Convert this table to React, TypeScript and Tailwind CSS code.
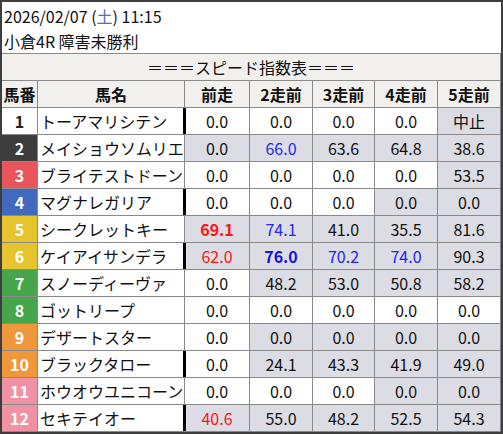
type Cell = {
    v: string;
    gray?: boolean;
    color?: "red" | "blue";
    bold?: boolean;
};

type Row = {
    num: number;
    name: string;
    bar?: boolean;
    cells: Cell[];
};

// waku colours (枠番)
const wakuClass: Record<number, string> = {
    1: "bg-white text-[#222]",
    2: "bg-[#3d3d3d] text-white",
    3: "bg-[#e8555b] text-white",
    4: "bg-[#4169c0] text-white",
    5: "bg-[#e6c42e] text-white",
    6: "bg-[#e6c42e] text-white",
    7: "bg-[#46a64b] text-white",
    8: "bg-[#46a64b] text-white",
    9: "bg-[#f0973b] text-white",
    10: "bg-[#f0973b] text-white",
    11: "bg-[#f191a4] text-white",
    12: "bg-[#f191a4] text-white",
};

const w = (v: string): Cell => ({ v });
const g = (v: string, extra: Partial<Cell> = {}): Cell => ({ v, gray: true, ...extra });

const rows: Row[] = [
    { num: 1, name: "トーアマリシテン", bar: true, cells: [w("0.0"), w("0.0"), w("0.0"), w("0.0"), g("中止")] },
    { num: 2, name: "メイショウソムリエ", cells: [g("0.0"), g("66.0", { color: "blue" }), g("63.6"), g("64.8"), g("38.6")] },
    { num: 3, name: "ブライテストドーン", cells: [w("0.0"), w("0.0"), w("0.0"), w("0.0"), g("53.5")] },
    { num: 4, name: "マグナレガリア", bar: true, cells: [w("0.0"), w("0.0"), w("0.0"), g("0.0"), g("0.0")] },
    {
        num: 5,
        name: "シークレットキー",
        cells: [g("69.1", { color: "red", bold: true }), g("74.1", { color: "blue" }), g("41.0"), g("35.5"), g("81.6")],
    },
    {
        num: 6,
        name: "ケイアイサンデラ",
        bar: true,
        cells: [
            g("62.0", { color: "red" }),
            g("76.0", { color: "blue", bold: true }),
            g("70.2", { color: "blue" }),
            g("74.0", { color: "blue" }),
            g("90.3"),
        ],
    },
    { num: 7, name: "スノーディーヴァ", cells: [w("0.0"), g("48.2"), g("53.0"), g("50.8"), g("58.2")] },
    { num: 8, name: "ゴットリープ", cells: [w("0.0"), w("0.0"), w("0.0"), w("0.0"), w("0.0")] },
    { num: 9, name: "デザートスター", cells: [w("0.0"), g("0.0"), g("0.0"), g("0.0"), g("0.0")] },
    { num: 10, name: "ブラックタロー", bar: true, cells: [w("0.0"), g("24.1"), g("43.3"), g("41.9"), g("49.0")] },
    { num: 11, name: "ホウオウユニコーン", cells: [w("0.0"), w("0.0"), w("0.0"), g("0.0"), g("0.0")] },
    { num: 12, name: "セキテイオー", bar: true, cells: [g("40.6", { color: "red" }), g("55.0"), g("48.2"), g("52.5"), g("54.3")] },
];

const headers = ["馬番", "馬名", "前走", "2走前", "3走前", "4走前", "5走前"];

const cellText = (c: Cell) => {
    if (c.color === "red") return "text-[#ff1414]";
    if (c.color === "blue") return c.bold ? "text-[#1616d6]" : "text-[#2424f0]";
    return "text-[#111]";
};

const App = () => {
    return (
        <div className="w-[503px] h-[434px] border-2 border-[#3d3d3d] bg-white flex flex-col font-['Noto_Sans_CJK_JP','Noto_Sans',sans-serif] text-[16px] text-[#111]">
            {/* race info */}
            <div className="h-[51px] pl-[2px] pt-[2px] leading-[25px]">
                <div>
                    2026/02/07 (<span className="text-[#4a70c6]">土</span>) 11:15
                </div>
                <div>小倉4R 障害未勝利</div>
            </div>

            {/* table */}
            <div className="flex flex-col gap-px bg-[#8a8a8a] border-t border-r border-b border-[#8a8a8a]">
                <div className="h-[26px] bg-[#f2f0ec] flex items-center justify-center leading-none">
                    ＝＝＝スピード指数表＝＝＝
                </div>
                <div className="grid grid-cols-[35px_146px_64px_62px_61px_62px_62px] auto-rows-[26px] gap-px">
                    {headers.map((h) => (
                        <div key={h} className="bg-[#f2f0ec] flex items-center justify-center font-bold leading-none">
                            {h}
                        </div>
                    ))}
                    {rows.map((row) => (
                        <div key={row.num} className="contents">
                            <div
                                className={`${wakuClass[row.num]} flex items-center justify-center font-bold leading-none`}
                            >
                                {row.num}
                            </div>
                            <div className="bg-white flex items-center pl-[2px] leading-none whitespace-nowrap overflow-hidden">
                                {row.name}
                            </div>
                            {row.cells.map((c, i) => (
                                <div
                                    key={i}
                                    className={`relative flex items-center justify-center leading-none ${
                                        c.gray ? "bg-[#dcdce4]" : "bg-white"
                                    } ${cellText(c)} ${c.bold ? "font-bold" : ""}`}
                                >
                                    {i === 0 && row.bar && (
                                        <span className="absolute -left-[2px] top-0 bottom-0 w-[3px] bg-black" />
                                    )}
                                    {c.v}
                                </div>
                            ))}
                        </div>
                    ))}
                </div>
            </div>
        </div>
    );
};

export default App;
